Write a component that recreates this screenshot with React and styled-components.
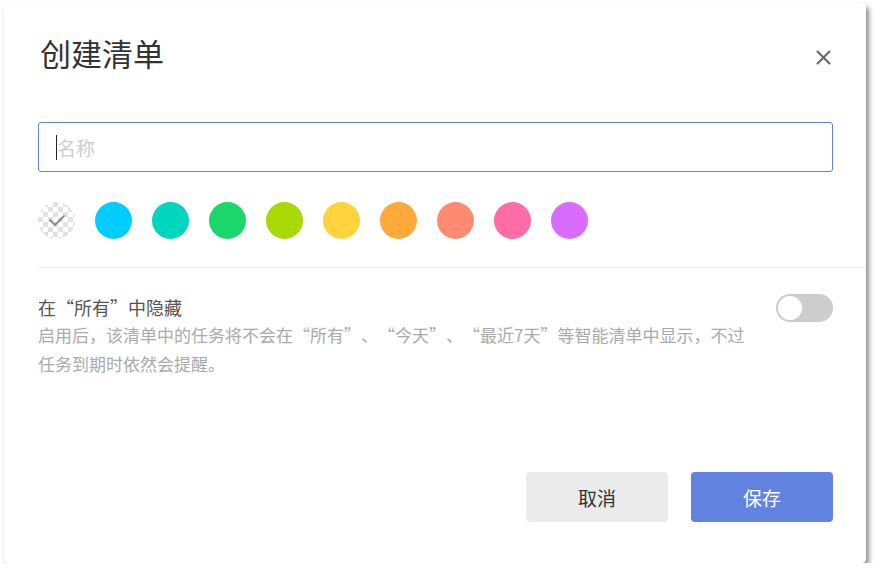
import React from 'react';
import styled, { createGlobalStyle } from 'styled-components';

const GlobalStyle = createGlobalStyle`
  html, body {
    margin: 0;
    padding: 0;
    background: #ffffff;
  }
  body {
    font-family: "Noto Sans CJK SC", "Liberation Sans", sans-serif;
    text-spacing-trim: space-all;
  }
`;

const Dialog = styled.div`
  box-sizing: border-box;
  margin: 3px 0 0 4px;
  width: 862px;
  height: 560px;
  background: #fff;
  border-radius: 4px;
  box-shadow: 3px 4px 5px rgba(0, 0, 0, 0.45), 0 0 1px rgba(0, 0, 0, 0.08);
  padding: 30px 33px 41px 34px;
  display: flex;
  flex-direction: column;
`;

const Header = styled.div`
  display: flex;
  justify-content: space-between;
  align-items: flex-start;
`;

const Title = styled.h1`
  margin: 0;
  padding-left: 2px;
  font-size: 31px;
  line-height: 40px;
  font-weight: 400;
  color: #333;
`;

const CloseBtn = styled.button`
  border: none;
  background: none;
  padding: 0;
  margin: 14px 0 0 0;
  width: 20px;
  height: 20px;
  display: flex;
  align-items: center;
  justify-content: center;
  cursor: pointer;
`;

const InputWrap = styled.div`
  position: relative;
  margin-top: 49px;
`;

const NameInput = styled.input`
  box-sizing: border-box;
  width: 100%;
  height: 50px;
  border: 1px solid #5f80e4;
  border-radius: 3px;
  padding: 0 18px;
  font-size: 19px;
  font-family: inherit;
  color: #333;
  outline: none;
  &::placeholder {
    color: #cdcdcd;
  }
`;

const Caret = styled.span`
  position: absolute;
  left: 18px;
  top: 13px;
  width: 1px;
  height: 25px;
  background: #222;
`;

const Colors = styled.div`
  display: flex;
  gap: 20px;
  margin-top: 30px;
`;

const Dot = styled.div`
  width: 37px;
  height: 37px;
  border-radius: 50%;
  background: ${p => p.$color};
`;

const NoColor = styled(Dot)`
  background-color: #fff;
  background-image:
    linear-gradient(45deg, #e2e2e2 25%, transparent 25%, transparent 75%, #e2e2e2 75%),
    linear-gradient(45deg, #e2e2e2 25%, transparent 25%, transparent 75%, #e2e2e2 75%);
  background-size: 10px 10px;
  background-position: 0 0, 5px 5px;
  display: flex;
  align-items: center;
  justify-content: center;
`;

const Divider = styled.div`
  height: 1px;
  background: #ececec;
  margin: 28px -33px 0 0;
`;

const Option = styled.div`
  display: flex;
  justify-content: space-between;
  align-items: flex-start;
  margin-top: 26px;
`;

const OptionText = styled.div`
  width: 712px;
`;

const OptionTitle = styled.div`
  font-size: 18px;
  line-height: 26px;
  color: #555;
`;

const OptionDesc = styled.div`
  font-size: 17px;
  line-height: 29px;
  color: #aaa;
`;

const Toggle = styled.div`
  box-sizing: border-box;
  width: 57px;
  height: 28px;
  border-radius: 14px;
  background: #cdcdcd;
  padding: 2px;
  flex-shrink: 0;
`;

const Knob = styled.div`
  width: 24px;
  height: 24px;
  border-radius: 50%;
  background: #fff;
`;

const Footer = styled.div`
  margin-top: auto;
  display: flex;
  justify-content: flex-end;
  gap: 23px;
`;

const Button = styled.button`
  width: 142px;
  height: 50px;
  border: none;
  border-radius: 4px;
  font-family: inherit;
  font-size: 19px;
  cursor: pointer;
  background: ${p => (p.$primary ? '#6282e0' : '#ebebeb')};
  color: ${p => (p.$primary ? '#fff' : '#333')};
`;

const colors = ['#00ccff', '#00d6be', '#1bd66b', '#a7d902', '#ffd33c', '#ffa93b', '#ff8a72', '#ff6ba6', '#da6bff'];

export default function App() {
  return (
    <>
      <GlobalStyle />
      <Dialog>
        <Header>
          <Title>创建清单</Title>
          <CloseBtn aria-label="关闭">
            <svg width="15" height="15" viewBox="0 0 15 15">
              <path d="M1.5 1.5 L13.5 13.5 M13.5 1.5 L1.5 13.5" stroke="#666" strokeWidth="2" strokeLinecap="round" />
            </svg>
          </CloseBtn>
        </Header>
        <InputWrap>
          <NameInput placeholder="名称" />
          <Caret />
        </InputWrap>
        <Colors>
          <NoColor>
            <svg width="18" height="14" viewBox="0 0 18 14">
              <path d="M2 6 L7 11 L16 2" fill="none" stroke="#8a8a8a" strokeWidth="1.8" strokeLinecap="round" strokeLinejoin="round" />
            </svg>
          </NoColor>
          {colors.map(c => <Dot key={c} $color={c} />)}
        </Colors>
        <Divider />
        <Option>
          <OptionText>
            <OptionTitle>在“所有”中隐藏</OptionTitle>
            <OptionDesc>启用后，该清单中的任务将不会在“所有”、“今天”、“最近7天”等智能清单中显示，不过任务到期时依然会提醒。</OptionDesc>
          </OptionText>
          <Toggle><Knob /></Toggle>
        </Option>
        <Footer>
          <Button>取消</Button>
          <Button $primary>保存</Button>
        </Footer>
      </Dialog>
    </>
  );
}
